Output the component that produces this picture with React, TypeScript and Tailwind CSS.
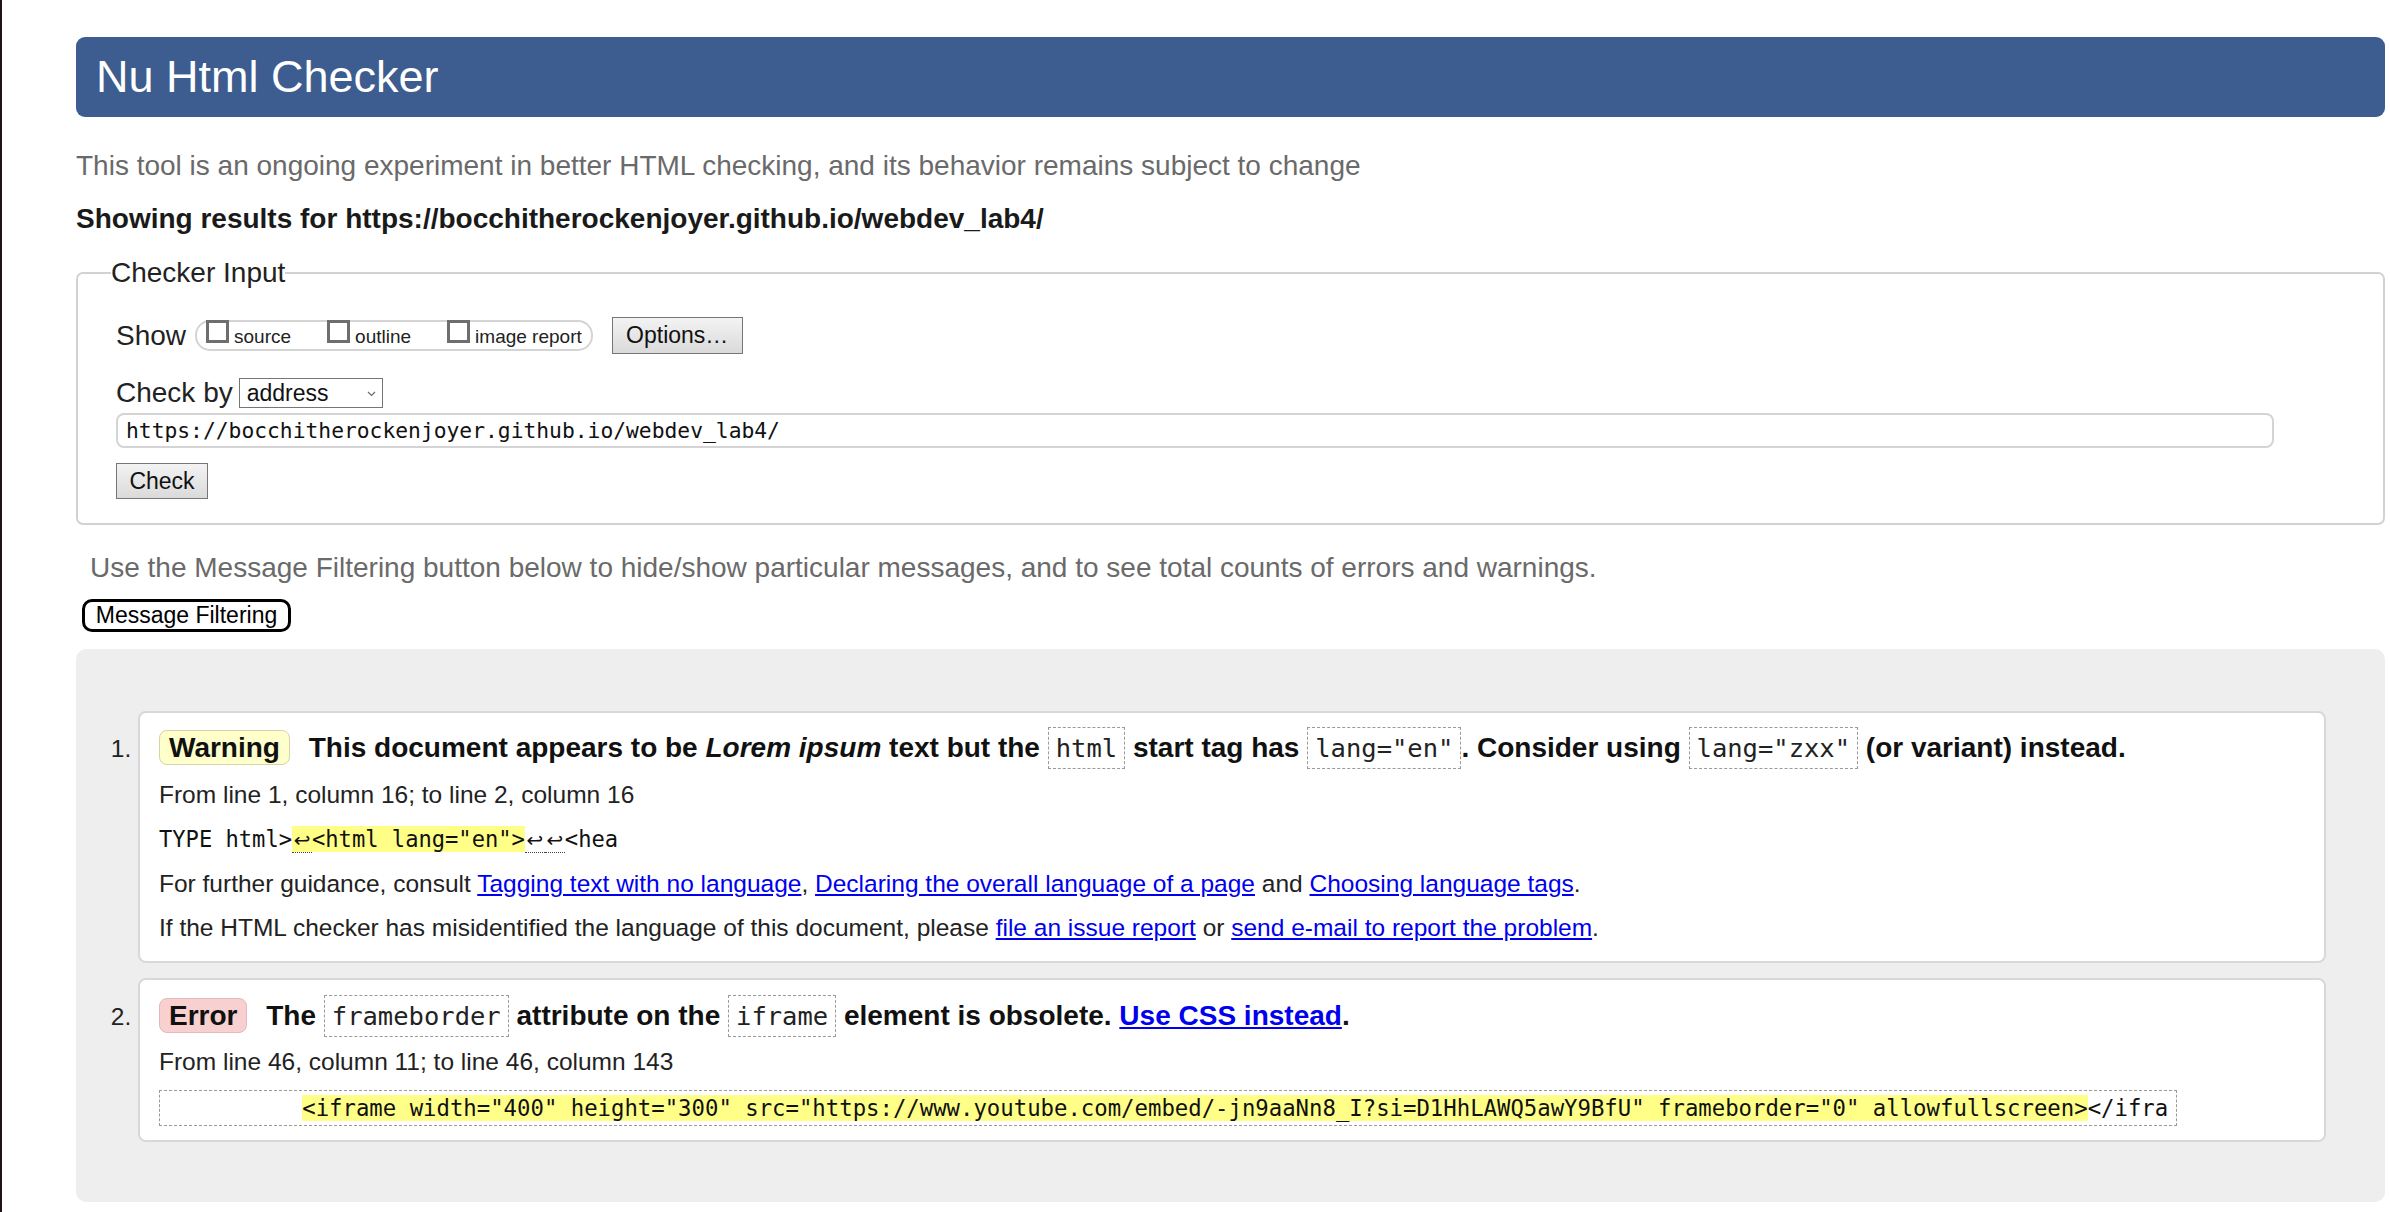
import React from "react";

function Code({ children }: { children: React.ReactNode }) {
  return (
    <code className="inline-block border border-dashed border-[#9a9a9a] px-[7px] font-['DejaVu_Sans_Mono',monospace] text-[25.5px] font-normal leading-[40px] text-[#222]">
      {children}
    </code>
  );
}

function Check({ label }: { label: string }) {
  return (
    <span className="flex items-baseline -mt-[2px]">
      <span className="block h-[23px] w-[23px] border-[3px] border-[#6e6e6e] bg-white" />
      <span className="ml-[5px] text-[19px] leading-[22px] text-[#222]">{label}</span>
    </span>
  );
}

function Btn({ children, className }: { children: React.ReactNode; className?: string }) {
  return (
    <button
      className={
        "flex items-center justify-center border border-[#767676] bg-linear-to-b from-[#f3f3f3] to-[#dadada] text-[23px] text-[#111] " +
        (className || "")
      }
    >
      {children}
    </button>
  );
}

function A({ children, bold }: { children: React.ReactNode; bold?: boolean }) {
  return (
    <a href="#" className={"text-[#0000ee] underline " + (bold ? "font-bold" : "")}>
      {children}
    </a>
  );
}

function Arrow() {
  return (
    <span className="inline-block w-[20px] border-b border-dotted border-[#444] text-center font-['DejaVu_Sans',sans-serif] text-[20px] leading-[24px]">
      ↩
    </span>
  );
}

export default function App() {
  return (
    <div className="min-h-screen bg-white border-l-[2px] border-[#1c1315] font-['Liberation_Sans',Arial,sans-serif] text-[#222]">
      <div className="pl-[74px] pr-[5px] pt-[37px] pb-[11px]">
        <h1 className="flex h-[80px] items-center rounded-[9px] bg-[#3d5c8f] pl-[20px] text-[45px] font-normal text-white">
          Nu Html Checker
        </h1>

        <p className="mt-[33px] text-[28px] leading-[32px] text-[#6a6a6a]">
          This tool is an ongoing experiment in better HTML checking, and its behavior remains subject to change
        </p>
        <p className="mt-[21px] text-[28px] font-bold leading-[32px] text-[#1a1a1a]">
          Showing results for https://bocchitherockenjoyer.github.io/webdev_lab4/
        </p>

        <fieldset className="mt-[22px] rounded-[7px] border-2 border-[#d2d2d2] pl-[33px] pb-[24px]">
          <legend className="text-[28px] leading-[32px] text-[#222]">Checker Input</legend>
          <div className="pl-[5px] pt-[28px]">
            <div className="flex h-[37px] items-center">
              <span className="text-[28px] leading-[32px]">Show</span>
              <div className="ml-[9px] flex h-[31px] items-start rounded-[15px] border-2 border-[#d4d4d4] pl-[9px] pr-[9px]">
                <Check label="source" />
                <span className="w-[36px]" />
                <Check label="outline" />
                <span className="w-[36px]" />
                <Check label="image report" />
              </div>
              <Btn className="ml-[19px] h-[37px] w-[131px]">Options…</Btn>
            </div>

            <div className="mt-[24px] flex h-[30px] items-center">
              <span className="text-[28px] leading-[32px]">Check by</span>
              <div className="ml-[6px] flex h-[30px] w-[144px] items-center justify-between border border-[#767676] bg-white pl-[7px] pr-[6px]">
                <span className="text-[23px] leading-[26px] text-[#111]">address</span>
                <svg width="9" height="6" viewBox="0 0 9 6" className="mt-[2px]">
                  <path d="M1 1 L4.5 4.5 L8 1" fill="none" stroke="#6b6b6b" strokeWidth="1.2" />
                </svg>
              </div>
            </div>

            <div className="mt-[5px] flex h-[35px] w-[2158px] items-center rounded-[8px] border-2 border-[#d4d4d4] pl-[8px] font-['DejaVu_Sans_Mono',monospace] text-[21.3px] text-[#111]">
              https://bocchitherockenjoyer.github.io/webdev_lab4/
            </div>

            <Btn className="mt-[15px] h-[36px] w-[92px]">Check</Btn>
          </div>
        </fieldset>

        <p className="mt-[27px] pl-[14px] text-[28px] leading-[32px] text-[#6a6a6a]">
          Use the Message Filtering button below to hide/show particular messages, and to see total counts of errors and warnings.
        </p>
        <div className="mt-[15px] pl-[6px]">
          <button className="flex h-[33px] w-[209px] items-center justify-center rounded-[10px] border-[3px] border-black bg-white text-[23px] text-black">
            Message Filtering
          </button>
        </div>

        <div className="mt-[17px] rounded-[10px] bg-[#eeeeee] pt-[62px] pb-[60px]">
          <ol className="list-decimal pl-[62px] pr-[59px] marker:text-[#222]">
            <li className="rounded-[8px] border-2 border-[#d8d8d8] bg-white pl-[19px] pt-[12px] pb-[18px] text-[24.5px]">
              <div className="text-[28px] font-bold leading-[45px] text-[#111]">
                <span className="mr-[11px] inline-block rounded-[8px] border border-[#d6d3a8] bg-[#ffffcc] px-[9px] leading-[33px]">
                  Warning
                </span>{" "}
                This document appears to be <i>Lorem ipsum</i> text but the <Code>html</Code> start tag has{" "}
                <Code>lang="en"</Code>. Consider using <Code>lang="zxx"</Code> (or variant) instead.
              </div>
              <p className="mt-[10px] leading-[30px]">From line 1, column 16; to line 2, column 16</p>
              <p className="mt-[15px] font-['DejaVu_Sans_Mono',monospace] text-[22.1px] leading-[29px] text-[#111] whitespace-pre">
                TYPE html&gt;
                <span className="bg-[#ffff88]">
                  <Arrow />&lt;html lang="en"&gt;
                </span>
                <Arrow />
                <Arrow />&lt;hea
              </p>
              <p className="mt-[15px] leading-[30px]">
                For further guidance, consult <A>Tagging text with no language</A>,{" "}
                <A>Declaring the overall language of a page</A> and <A>Choosing language tags</A>.
              </p>
              <p className="mt-[14px] leading-[30px]">
                If the HTML checker has misidentified the language of this document, please <A>file an issue report</A> or{" "}
                <A>send e-mail to report the problem</A>.
              </p>
            </li>

            <li className="mt-[15px] rounded-[8px] border-2 border-[#d8d8d8] bg-white pl-[19px] pt-[13px] pb-[13px] text-[24.5px]">
              <div className="text-[28px] font-bold leading-[45px] text-[#111]">
                <span className="mr-[11px] inline-block rounded-[8px] border border-[#e3b9b9] bg-[#f8d0d0] px-[9px] leading-[33px]">
                  Error
                </span>{" "}
                The <Code>frameborder</Code> attribute on the <Code>iframe</Code> element is obsolete.{" "}
                <A bold>Use CSS instead</A>.
              </div>
              <p className="mt-[9px] leading-[30px]">From line 46, column 11; to line 46, column 143</p>
              <div className="mt-[13px] inline-block border border-dashed border-[#9a9a9a] px-[8px] py-[3px] font-['DejaVu_Sans_Mono',monospace] text-[22.3px] leading-[28px] text-[#111] whitespace-pre">
                {"          "}
                <span className="bg-[#ffff88]">
                  &lt;iframe width="400" height="300" src="https://www.youtube.com/embed/-jn9aaNn8_I?si=D1HhLAWQ5awY9BfU"
                  frameborder="0" allowfullscreen&gt;
                </span>
                &lt;/ifra
              </div>
            </li>
          </ol>
        </div>
      </div>
    </div>
  );
}
